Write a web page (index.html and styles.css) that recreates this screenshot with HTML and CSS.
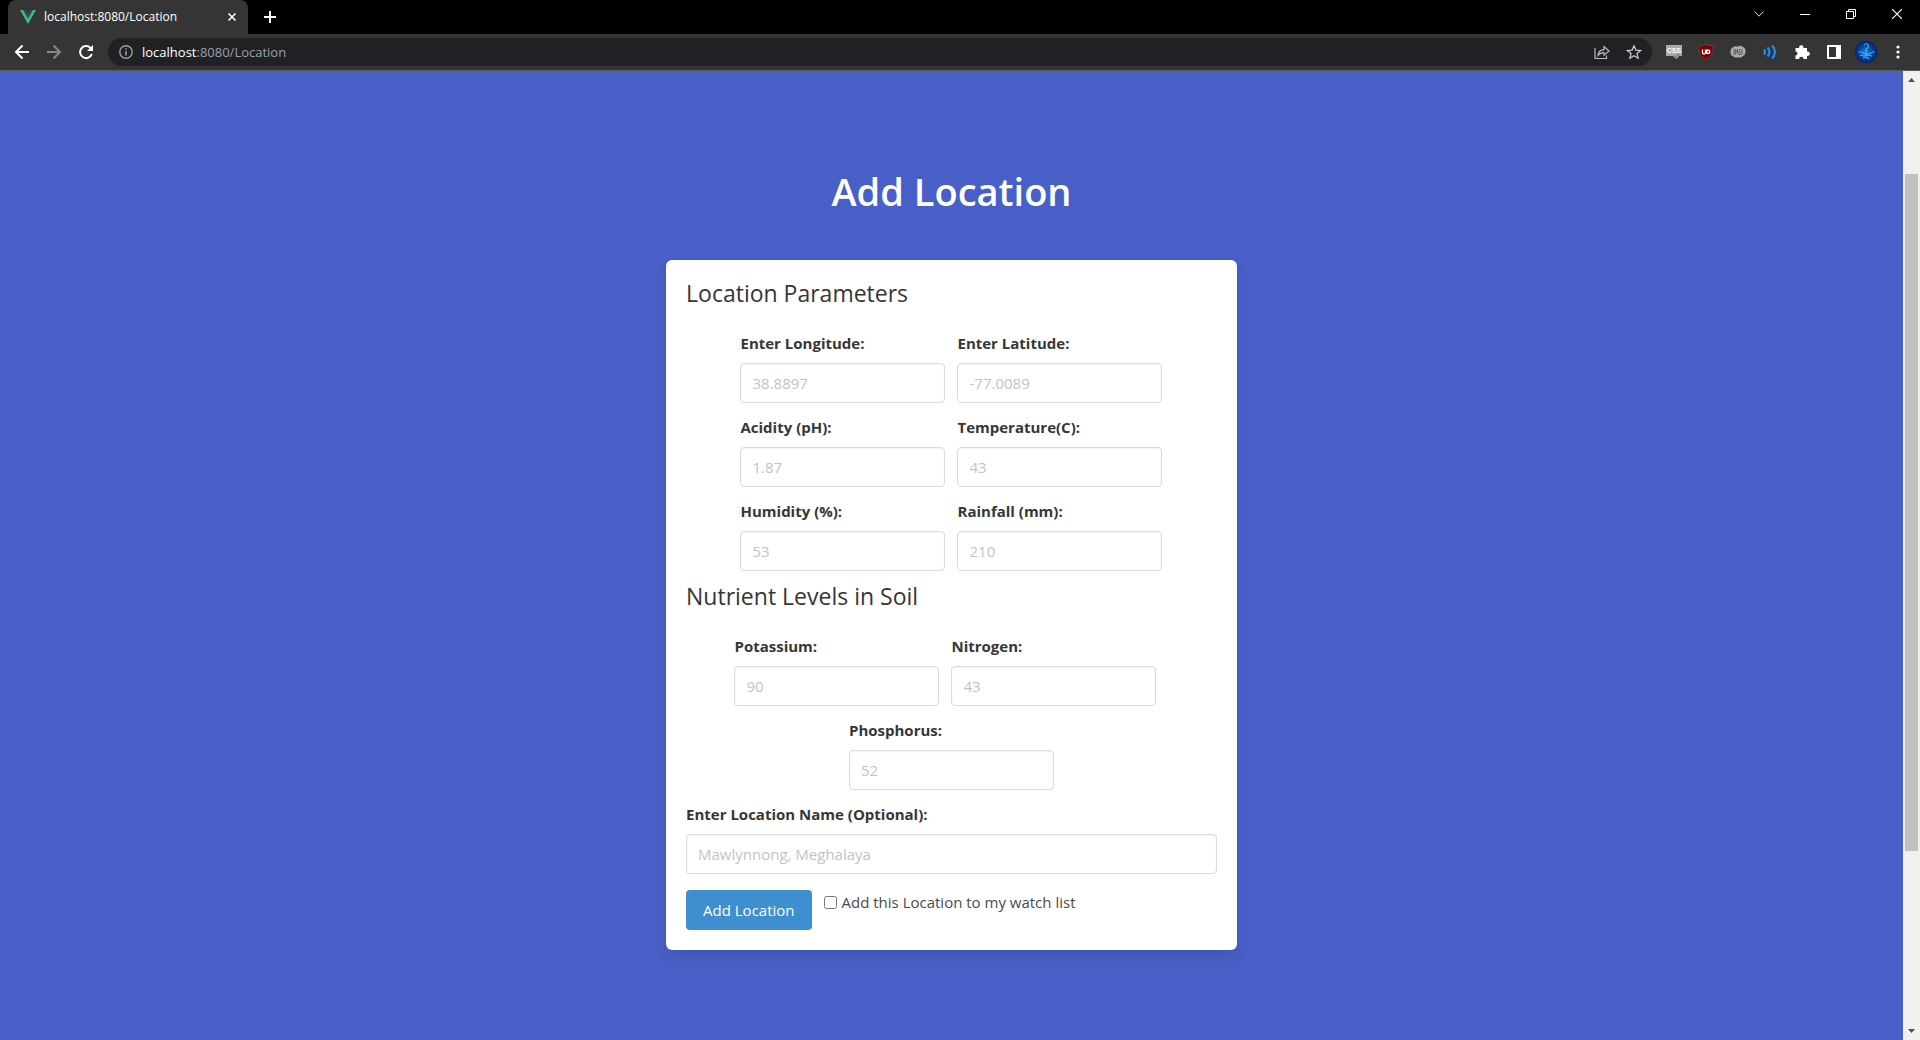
FILE: index.html
```html
<!DOCTYPE html>
<html lang="en">
<head>
<meta charset="utf-8">
<title>localhost:8080/Location</title>
<link rel="stylesheet" href="styles.css">
</head>
<body>
<header class="browser">
  <div class="tabstrip">
    <div class="tab">
      <svg class="favicon" viewBox="0 0 16 16" width="16" height="16"><path fill="#41b883" d="M0 1h3.2L8 9.300l4.800-8.300H16L8 15z"/><path fill="#34495e" d="M3.200 1h3L8 4.200 9.800 1h3L8 9.300z"/></svg>
      <span class="tab-title">localhost:8080/Location</span>
      <button class="tab-close" aria-label="Close tab"><svg viewBox="0 0 8 8" width="8" height="8"><path d="M.5.5l7 7M7.500.5l-7 7" stroke="#fff" stroke-width="1.500"/></svg></button>
    </div>
    <button class="new-tab" aria-label="New tab"><svg viewBox="0 0 12 12" width="12" height="12"><path d="M6 0v12M0 6h12" stroke="#fff" stroke-width="2"/></svg></button>
    <div class="window-controls">
      <button aria-label="Search tabs"><svg viewBox="0 0 10 6" width="10" height="6"><path d="M.5.5L5 5.200 9.500.5" fill="none" stroke="#ddd"/></svg></button>
      <button aria-label="Minimize"><svg viewBox="0 0 10 10" width="10" height="10"><path d="M0 5.500h10" stroke="#fff"/></svg></button>
      <button aria-label="Restore"><svg viewBox="0 0 10 10" width="10" height="10"><path d="M.5 2.500h7v7h-7zM2.500 2.500v-2h7v7h-2" fill="none" stroke="#fff"/></svg></button>
      <button aria-label="Close"><svg viewBox="0 0 10 10" width="10" height="10"><path d="M0 0l10 10M10 0L0 10" stroke="#fff" stroke-width="1.200"/></svg></button>
    </div>
  </div>
  <div class="toolbar">
    <div class="tools">
      <button aria-label="Back"><svg viewBox="0 0 16 16" width="16" height="16"><path d="M15 8H2.500M8.500 1.500L2 8l6.500 6.500" fill="none" stroke="#fff" stroke-width="2"/></svg></button>
      <button aria-label="Forward"><svg viewBox="0 0 16 16" width="16" height="16"><path d="M1 8h12.500M7.500 1.500L14 8l-6.500 6.500" fill="none" stroke="#868686" stroke-width="2"/></svg></button>
      <button aria-label="Reload"><svg viewBox="0 0 16 16" width="16" height="16"><path d="M13.800 10A6 6 0 1 1 12.300 3.800L14 5.500" fill="none" stroke="#fff" stroke-width="2"/><path d="M15 1v6H9z" fill="#fff"/></svg></button>
    </div>
    <div class="omnibox">
      <svg class="info" viewBox="0 0 14 14" width="14" height="14"><circle cx="7" cy="7" r="6.200" fill="none" stroke="#9aa0a6" stroke-width="1.400"/><path d="M7 6v4.500M7 3.300v1.500" stroke="#9aa0a6" stroke-width="1.500"/></svg>
      <span class="url"><b>localhost</b>:8080/Location</span>
      <button aria-label="Share"><svg viewBox="0 0 16 16" width="16" height="16"><path d="M1 4v10.500h11.500v-3M4 11.500C4.300 7.500 6.500 5.800 10 5.600V2.600L15 7l-5 4.300V8.600C7.300 8.600 5.500 9.400 4 11.500z" fill="none" stroke="#bbb" stroke-width="1.200"/></svg></button>
      <button aria-label="Bookmark"><svg viewBox="0 0 16 16" width="16" height="16"><path d="M8 1.800l1.900 4.300 4.700.4-3.600 3.100 1.100 4.600L8 11.800l-4.100 2.400L5 9.600 1.400 6.500l4.700-.4z" fill="none" stroke="#c8c8c8" stroke-width="1.300"/></svg></button>
    </div>
    <div class="tools">
      <button aria-label="CSS viewer"><svg viewBox="0 0 16 16" width="16" height="16"><path d="M0 1h16v11h-3l-2 3-3-3H0z" fill="#aaa"/><path d="M7.500 11.500l2 2L14 9.500" fill="none" stroke="#888" stroke-width="2"/><text x="8" y="9" text-anchor="middle" class="badge-text css">CSS</text></svg></button>
      <button aria-label="Ad blocker"><svg viewBox="0 0 16 16" width="16" height="16"><path d="M8 .3C6 1.300 3.500 1.800 1 1.800c0 7 0 10.500 7 14 7-3.500 7-7 7-14-2.500 0-5-.5-7-1.500z" fill="#800000" stroke="#666" stroke-width=".5"/><path d="M4.500 5.500v3a1.500 1.500 0 0 0 3 0v-3M8.800 6.200h1.400a1.500 1.500 0 0 1 0 3.200H8.800z" fill="none" stroke="#fff" stroke-width="1.300"/></svg></button>
      <button aria-label="Extension"><svg viewBox="0 0 16 16" width="16" height="16"><path d="M3 3.200C5 1.500 6.500 3 8 2.200s3.500-.7 4.700.8c2 .3 3 2 2.800 4.500s-.8 4-3 4.700c-1.500 2-3 1.300-4.300 1.300S4.800 14 3.500 12.500C1 12 .3 10 .5 7.500S1.200 4 3 3.200z" fill="#aaa"/><path d="M3 6h3v4H3m0-2h3M7.500 5v3.500h2.300V5M12 5v5h-2M8 10.500h2" fill="none" stroke="#555"/></svg></button>
      <button aria-label="Sound"><svg viewBox="0 0 16 16" width="16" height="16"><path d="M2 5.500q2 2.500 0 5M5.500 3.500q4 4.500 0 9M10 1.500q6 6.500 0 13" fill="none" stroke="#1590f5" stroke-width="2.200"/></svg></button>
      <button aria-label="Extensions"><svg viewBox="0 0 16 16" width="16" height="16"><path d="M1.500 4h3.700a2.200 2.200 0 1 1 4.200 0H13v3.600a2.200 2.200 0 1 1 0 4.200V15H9.500a2.200 2.200 0 0 0-4.400 0H1.500v-3.600a2 2 0 0 0 0-4z" fill="#fff"/></svg></button>
      <button aria-label="Side panel"><svg viewBox="0 0 14 14" width="14" height="14"><path fill="#fff" fill-rule="evenodd" d="M0 0h14v14H0zM2 2v10h7V2z"/></svg></button>
      <button aria-label="Profile"><svg viewBox="0 0 22 22" width="22" height="22"><defs><radialGradient id="sea"><stop offset="0" stop-color="#1782dc"/><stop offset=".6" stop-color="#0945a0"/><stop offset="1" stop-color="#06206d"/></radialGradient></defs><circle cx="11" cy="11" r="11" fill="url(#sea)"/><path d="M9 4q3-3 4 0t-2 4v5M3 11h4l2 2h5l4-2h2M5 14l4 1 3-1 5 1M8 17l3-1 3 2" fill="none" stroke="#4fc3f5" stroke-width="1.200" opacity=".8"/></svg></button>
      <button aria-label="Menu"><svg viewBox="0 0 4 14" width="4" height="14"><g fill="#fff"><circle cx="2" cy="2" r="1.600"/><circle cx="2" cy="7" r="1.600"/><circle cx="2" cy="12" r="1.600"/></g></svg></button>
    </div>
  </div>
</header>
<div class="viewport">
  <main class="page">
    <h1 class="title">Add Location</h1>
    <form class="box">
      <h2 class="subtitle">Location Parameters</h2>
      <div class="group">
        <div class="field"><label for="lon">Enter Longitude:</label><input id="lon" type="text" placeholder="38.8897"></div>
        <div class="field"><label for="lat">Enter Latitude:</label><input id="lat" type="text" placeholder="-77.0089"></div>
      </div>
      <div class="group">
        <div class="field"><label for="ph">Acidity (pH):</label><input id="ph" type="text" placeholder="1.87"></div>
        <div class="field"><label for="temp">Temperature(C):</label><input id="temp" type="text" placeholder="43"></div>
      </div>
      <div class="group">
        <div class="field"><label for="hum">Humidity (%):</label><input id="hum" type="text" placeholder="53"></div>
        <div class="field"><label for="rain">Rainfall (mm):</label><input id="rain" type="text" placeholder="210"></div>
      </div>
      <h2 class="subtitle">Nutrient Levels in Soil</h2>
      <div class="group trailing">
        <div class="field"><label for="pot">Potassium:</label><input id="pot" type="text" placeholder="90"></div>
        <div class="field"><label for="nit">Nitrogen:</label><input id="nit" type="text" placeholder="43"></div>
      </div>
      <div class="group">
        <div class="field"><label for="pho">Phosphorus:</label><input id="pho" type="text" placeholder="52"></div>
      </div>
      <div class="field wide"><label for="name">Enter Location Name (Optional):</label><input id="name" type="text" placeholder="Mawlynnong, Meghalaya"></div>
      <div class="actions">
        <button class="submit" type="submit">Add Location</button>
        <label class="checkbox"><input type="checkbox">Add this Location to my watch list</label>
      </div>
    </form>
  </main>
  <div class="scrollbar" aria-hidden="true">
    <svg viewBox="0 0 17 17" width="17" height="17"><path d="M5 11h7L8.500 7z" fill="#505050"/></svg>
    <div class="track"><div class="thumb"></div></div>
    <svg viewBox="0 0 17 17" width="17" height="17"><path d="M5 6h7l-3.500 4z" fill="#505050"/></svg>
  </div>
</div>
</body>
</html>
```
FILE: styles.css
```css
* { box-sizing: border-box; }

body {
  margin: 0;
  min-height: 100vh;
  display: flex;
  flex-direction: column;
  font-family: "Open Sans", "Noto Sans", sans-serif;
  font-size: 15px;
  line-height: 24px;
  color: #4a4a4a;
}

button, input { font: inherit; }
svg { display: block; flex: none; }

/* Browser frame */
.browser { background: #353535; border-bottom: 1px solid #5c5c5c; }
.browser button {
  display: flex;
  align-items: center;
  justify-content: center;
  padding: 0;
  border: 0;
  background: none;
}
.tabstrip { display: flex; height: 34px; padding-left: 8px; background: #000; }
.tab {
  display: flex;
  align-items: center;
  width: 240px;
  height: 34px;
  padding: 0 8px 0 12px;
  gap: 8px;
  border-radius: 8px 8px 0 0;
  background: #353535;
  color: #fff;
  font-size: 12px;
}
.tab-title { flex: 1; white-space: nowrap; }
.tab-close { width: 16px; height: 16px; }
.new-tab { width: 28px; height: 34px; margin-left: 8px; }
.window-controls { display: flex; margin-left: auto; height: 28px; }
.window-controls button { width: 46px; }

.toolbar { display: flex; align-items: center; height: 36px; padding: 0 6px; gap: 6px; }
.tools { display: flex; }
.tools button, .omnibox button { width: 32px; height: 28px; }
.omnibox {
  display: flex;
  flex: 1;
  align-items: center;
  height: 28px;
  padding: 0 2px 0 11px;
  border-radius: 14px;
  background: #202124;
}
.url { flex: 1; margin-left: 9px; font-size: 13px; color: #9aa0a6; }
.url b { font-weight: 400; color: #fff; }
.badge-text { fill: #fff; font-family: "Liberation Sans", sans-serif; font-weight: 700; }
.css { font-size: 7px; }

/* Page */
.viewport { display: flex; flex: 1; }
.page {
  display: flex;
  flex: 1;
  flex-direction: column;
  align-items: center;
  padding: 98px 0 90px;
  background: #485fc7;
}
.title { margin: 0 0 46px; font-size: 38px; line-height: 45px; font-weight: 600; color: #fff; }
.box {
  width: 30%;
  min-width: 480px;
  padding: 20px;
  border-radius: 6px;
  background: #fff;
  box-shadow: 0 8px 16px -2px rgba(10, 10, 10, .1), 0 0 0 1px rgba(10, 10, 10, .02);
}
.subtitle { margin: 0 0 24px; font-size: 23px; line-height: 27px; font-weight: 400; color: #363636; }
.group { display: flex; justify-content: center; gap: 12px; margin-bottom: 12px; }
.trailing { padding-right: 12px; }
.field { display: flex; flex-direction: column; gap: 8px; width: 205px; }
.field label { font-weight: 700; color: #363636; }
.field input {
  width: 100%;
  height: 40px;
  padding: 0 11px;
  border: 1px solid #dbdbdb;
  border-radius: 4px;
  background: #fff;
  box-shadow: inset 0 1px 2px rgba(10, 10, 10, .05);
  color: #363636;
}
.field input::placeholder { color: #c3c3c3; opacity: 1; }
.wide { width: 100%; margin-bottom: 16px; }
.actions { display: flex; align-items: flex-start; gap: 12px; }
.submit { height: 40px; padding: 0 17px; border: 0; border-radius: 4px; background: #3e8ed0; color: #fff; }
.checkbox { display: flex; align-items: center; gap: 5px; }
.checkbox input { width: 13px; height: 13px; margin: 0; }

.scrollbar { display: flex; flex-direction: column; width: 17px; background: #f1f1f1; }
.track { display: flex; flex: 1; flex-direction: column; padding: 0 2px; }
.track::before { content: ""; flex: 86; }
.track::after { content: ""; flex: 172; }
.thumb { flex: 677; background: #c1c1c1; }
```
